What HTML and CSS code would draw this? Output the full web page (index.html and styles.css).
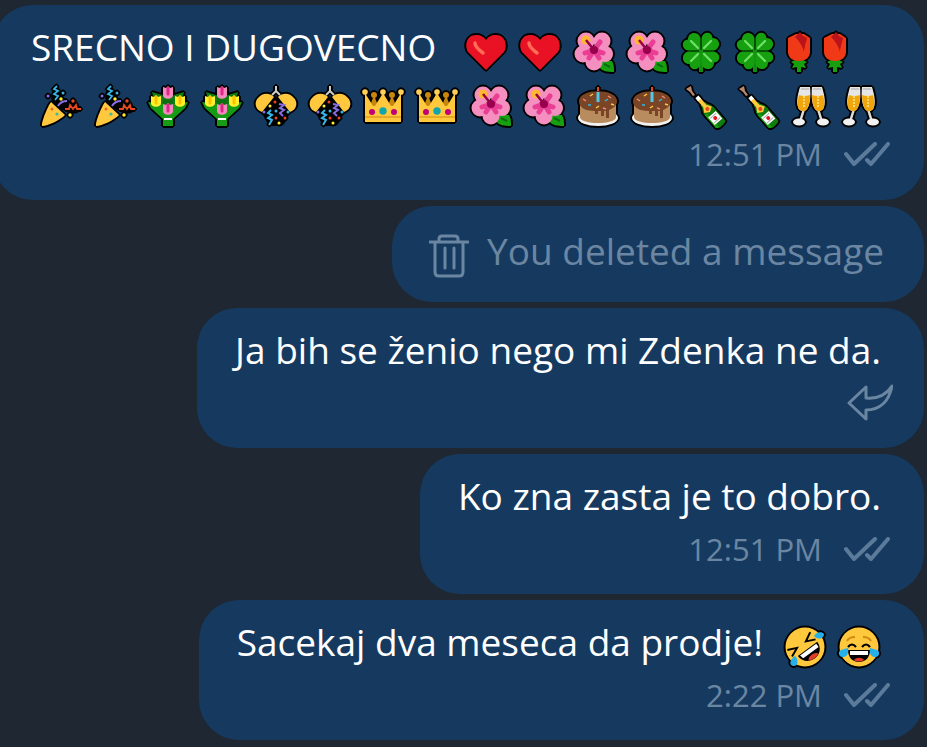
FILE: index.html
```html
<!DOCTYPE html>
<html lang="sr">
<head>
  <meta charset="UTF-8">
  <meta name="viewport" content="width=device-width, initial-scale=1.0">
  <title>Chat</title>
  <link rel="stylesheet" href="styles.css">
</head>
<body>
  <svg class="sprite" aria-hidden="true">
    <symbol id="heart" viewBox="0 0 44 44">
      <path fill="#e81224" d="M22 40L4 22C0 15 3 5 12 5c5 0 8 2 10 5 2-3 5-5 10-5 9 0 12 10 8 17z"/>
      <path d="M11 13q0 4 8 10" fill="none" stroke="#ff6b55" stroke-width="3.5" stroke-linecap="round"/>
    </symbol>
    <symbol id="flower" viewBox="0 0 44 44">
      <path fill="#16a010" d="M28 30l12 1c2 3 2 7 2 11-7 0-12-1-14-4z"/>
      <path d="M32 34l6 3" stroke="#0c6b10" stroke-width="2"/>
      <g fill="#f48fc0"><circle cx="14" cy="11" r="8.5"/><circle cx="30" cy="11" r="8.5"/><circle cx="33" cy="24" r="8"/><circle cx="22" cy="32" r="8.5"/><circle cx="11" cy="24" r="8.5"/></g>
      <path d="M22 20l6-8M22 20l9 3M22 20l5 8M22 20l-5 8M22 20l-9 3" stroke="#e93e93" stroke-width="5" stroke-linecap="round"/>
      <circle cx="14" cy="10" r="4.5" fill="#ffb82e"/>
      <circle cx="22" cy="20" r="4" fill="#98004e"/>
      <path d="M22 20l-8-10" stroke="#98004e" stroke-width="2.5"/>
    </symbol>
    <symbol id="clover" viewBox="0 0 44 44">
      <path d="M22 20v22" stroke="#138a10" stroke-width="4"/>
      <g fill="#16a010">
        <path id="leaf" d="M21.5 20.5H9C2 19 2 10 9 9.5 9 1 20 1 21.5 8z"/>
        <use href="#leaf" transform="rotate(90 22 21)"/>
        <use href="#leaf" transform="rotate(180 22 21)"/>
        <use href="#leaf" transform="rotate(270 22 21)"/>
      </g>
      <path d="M12 11l7 7M32 11l-7 7M12 31l7-7M32 31l-7-7" stroke="#72e069" stroke-width="2.2" stroke-linecap="round"/>
    </symbol>
    <symbol id="rose" viewBox="0 0 26 44">
      <path fill="#16a010" d="M13 28l8 4-3 2 2 4-5-1v5h-4v-5l-5 1 2-4-3-2z"/>
      <path fill="#f03a17" d="M2 8l8-4h8l6 4v14c0 5-4 9-11 9S2 27 2 22z"/>
      <path fill="#ba141a" d="M9 7l5-5 3 4 4 2-3 14C16 15 13 11 9 7z"/>
      <path fill="#f03a17" d="M17 26c2-6 1-13 6-18v15c0 3-3 5-6 6z"/>
    </symbol>
    <symbol id="popper" viewBox="0 0 44 44">
      <path d="M16 3l4 6 2 5 5 3 8 4 4 6-7 1-10-5-8-8z"/>
      <path fill="#ffc83d" d="M12 18l14 13c-5 5-17 11-23 11-1-4 6-20 9-24z"/>
      <path d="M19 22q3-5 9-5" fill="none" stroke="#886ce4" stroke-width="2"/>
      <path d="M18 2l-3 3 4 2-4 3 4 2-3 4" fill="none" stroke="#35b5e5" stroke-width="1.8"/>
      <path d="M26 25h4l1-4 3 4 3-4 1 4h4" fill="none" stroke="#e74820" stroke-width="1.8"/>
      <circle cx="9" cy="12" r="1.5" fill="#886ce4"/><circle cx="24" cy="9" r="1.5" fill="#35b5e5"/>
      <circle cx="22" cy="15" r="1.7" fill="#fff12d"/><circle cx="34" cy="17" r="1.7" fill="#e74820"/>
      <circle cx="31" cy="31" r="1.7" fill="#fff12d"/><circle cx="13" cy="25" r="1.5" fill="#f0642d"/><circle cx="18" cy="30" r="1.6" fill="#40b8a0"/>
    </symbol>
    <symbol id="bouquet" viewBox="0 0 44 44">
      <path fill="#107c10" d="M6 8l10 3 6 3 6-3 10-3-5 18H11z"/>
      <path fill="#169b14" d="M2 18l20 3 20-3-3 6-12 11v7H17v-7L5 24z"/>
      <path fill="#0e6e12" d="M17 16h10v6H17z"/>
      <path fill="#fff" d="M18 34h8v2h-8z"/>
      <path fill="#f58ac0" d="M17 3l3 1 2-2 2 2 3-1v8c0 5-10 5-10 0zM17 20l3 1 2-2 2 2 3-1v7c0 5-10 5-10 0z"/>
      <path stroke="#df2586" stroke-width="3" stroke-linecap="round" d="M22 4v6M22 21v6"/>
      <path fill="#fff12d" d="M5 12l3 1 2-2 2 2 3-1v7c0 5-10 5-10 0zM29 12l3 1 2-2 2 2 3-1v7c0 5-10 5-10 0z"/>
      <path stroke="#ffc000" stroke-width="3" stroke-linecap="round" d="M10 13v6M34 13v6"/>
    </symbol>
    <symbol id="ball" viewBox="0 0 44 44">
      <path d="M21 14L9 27l7 13h12l7-13z"/>
      <path fill="#ffc83d" d="M20 13L8 28C1 26 0 18 4 14c4-5 11-6 16-1zM24 13l12 15c7-2 8-10 4-14-4-5-11-6-16-1z"/>
      <path d="M22 2v5l-4 4M22 7l4 4" fill="none" stroke="#ccc" stroke-width="2"/>
      <path d="M17 26l-3 3 4 2-4 3 4 2-3 5" fill="none" stroke="#35b5e5" stroke-width="2"/>
      <path d="M25 20l5 1-4 3 4 2-4 3 3 3" fill="none" stroke="#886ce4" stroke-width="2"/>
      <g fill="#e74820"><circle cx="21" cy="18" r="1.5"/><circle cx="22" cy="34" r="1.5"/><circle cx="31" cy="34" r="1.5"/></g>
      <g fill="#fff12d"><circle cx="16" cy="22" r="1.5"/><circle cx="25" cy="39" r="1.5"/></g>
      <g fill="#35b5e5"><circle cx="22" cy="27" r="1.5"/><circle cx="34" cy="28" r="1.5"/></g>
      <circle cx="10" cy="28" r="1.5" fill="#886ce4"/>
    </symbol>
    <symbol id="crown" viewBox="0 0 44 44">
      <path fill="#c8860d" d="M13 11l6 16H7zM31 11l6 16H25z"/>
      <circle cx="13" cy="11" r="3" fill="#c8860d"/><circle cx="31" cy="11" r="3" fill="#c8860d"/>
      <path fill="#ffc83d" d="M4 9l8 13h2l8-13 8 13h2l8-13v29H4z"/>
      <g fill="#ffcf5c"><circle cx="4" cy="8" r="2.8"/><circle cx="22" cy="8" r="2.8"/><circle cx="40" cy="8" r="2.8"/></g>
      <path d="M4 33h36" stroke="#d08c10" stroke-width="1"/>
      <circle cx="11" cy="28" r="3" fill="#bf0077"/><circle cx="33" cy="28" r="3" fill="#bf0077"/><circle cx="22" cy="27" r="3.7" fill="#0fa5ad"/>
    </symbol>
    <symbol id="cake" viewBox="0 0 44 44">
      <ellipse cx="22" cy="34" rx="20" ry="8" fill="#f2f2f2"/>
      <path fill="#b98c5f" d="M4 18h36v15c0 8-36 8-36 0z"/>
      <path fill="#7a4527" d="M3 17C3 4 41 4 41 17c0 4-3 7-8 9v8h-3v-7h-2v5h-3v-5h-3v3h-3v-3C8 27 3 23 3 17z"/>
      <path stroke="#50c8e8" stroke-width="3" d="M22 8v10"/>
      <path stroke="#e74820" stroke-width="2" d="M22 3v4"/>
      <path d="M14 12l3-2M20 24l3-2M35 20l3 1" stroke="#ffc83d" stroke-width="1.5"/>
      <path d="M7 15l3 2M32 12l3 2M27 24l3 1" stroke="#f08a70" stroke-width="1.5"/>
      <path d="M29 17l3-2M12 21h3" stroke="#35b5e5" stroke-width="1.5"/>
    </symbol>
    <symbol id="bottle" viewBox="0 0 44 44">
      <path fill="#b9896e" d="M2 5l5-3 1 5 3 4-2 1-3-4z"/>
      <g transform="rotate(-41 26 28)">
        <path fill="#107c10" d="M23 17h6c0 5 3 5 3 10v17c0 3-12 3-12 0V27c0-5 3-5 3-10z"/>
        <path fill="#16a010" d="M20 27h3v18h-3z"/>
        <path fill="#ffc83d" d="M24 11h4v9l3 5-5 3-5-3 3-5z"/>
        <path fill="#fff" d="M24 8h4v4h-4zM21 31h10v10H21z"/>
        <circle cx="26" cy="24" r="2" fill="#e74820"/><circle cx="26" cy="36" r="2" fill="#e81224"/>
        <path d="M22 33h8M22 39h8" stroke="#aaa" stroke-width="1"/>
      </g>
    </symbol>
    <symbol id="glasses" viewBox="0 0 40 44">
      <g id="glass">
        <path d="M13 25l-4 13" stroke="#ddd" stroke-width="2.5"/>
        <path fill="#e6e6e6" d="M9 3h10c1 9 0 18-3 22-3 4-8 2-9-2-2-6 0-13 2-20z"/>
        <path fill="#f2a60d" d="M8 11q5 2 11 0c0 6-1 11-3 14-3 4-8 2-9-2-1-4 0-8 1-12z"/>
        <path d="M13 12v12" stroke="#ffd66b" stroke-width="2" stroke-dasharray="2 1"/>
        <path d="M10 5h8" stroke="#bbb" stroke-width="1.5"/>
        <ellipse cx="8" cy="38" rx="6" ry="3.5" fill="#f2f2f2"/>
      </g>
      <use href="#glass" transform="matrix(-1 0 0 1 40 0)"/>
    </symbol>
    <symbol id="rofl" viewBox="0 0 44 44">
      <circle cx="22" cy="22" r="19.5" fill="#ffc83d"/>
      <g transform="rotate(-36 22 22)">
        <path d="M6 14l9 4-9 4M35 13l-9 5 9 4" fill="none" stroke="#000" stroke-width="2"/>
        <path d="M11 25h24c0 7-5 12-12 12s-12-5-12-12z"/>
        <path fill="#fff" d="M13 26h20v4H14z"/>
        <path fill="#e23b28" d="M17 35c2-4 10-4 12 0-3 2-9 2-12 0z"/>
      </g>
      <path fill="#26b0ea" d="M31 11c2-4 8-5 10-2 0 4-5 7-10 2zM12 31c4 4 3 10-1 10-5 0-5-6 1-10z"/>
    </symbol>
    <symbol id="joy" viewBox="0 0 44 44">
      <circle cx="22" cy="22" r="19.5" fill="#ffc83d"/>
      <path d="M10 16q2-4 8-4M34 16q-2-4-8-4" fill="none" stroke="#d08c10" stroke-width="2"/>
      <path d="M11 22q4-5 8 0M25 22q4-5 8 0" fill="none" stroke="#000" stroke-width="2.2"/>
      <path d="M11 25h22c0 7-4 12-11 12s-11-5-11-12z"/>
      <path fill="#fff" d="M13 26h18v4H13z"/>
      <path fill="#e23b28" d="M17 35c2-3 8-3 10 0-3 2-7 2-10 0z"/>
      <path fill="#26b0ea" d="M11 23c1 5-1 9-5 9s-6-5-2-7zM33 23c-1 5 1 9 5 9s6-5 2-7z"/>
    </symbol>
    <symbol id="checks" viewBox="0 0 46 24">
      <path d="M2 12l8 10L31 2M23 18l4 4L44 2" fill="none" stroke="currentColor" stroke-width="4" stroke-linecap="round" stroke-linejoin="round"/>
    </symbol>
    <symbol id="trash" viewBox="0 0 40 44">
      <path d="M1 8h38M10 8V5q0-3 3-3h13q3 0 3 3v3M6 8v30q0 4 4 4h20q4 0 4-4V8M16 14v20M25 14v20" fill="none" stroke="currentColor" stroke-width="3" stroke-linecap="round"/>
    </symbol>
    <symbol id="forward" viewBox="0 0 46 38">
      <path d="M2 19L19 3v11C30 15 39 11 45 2 42 17 33 26 19 26v9z" fill="none" stroke="currentColor" stroke-width="3" stroke-linejoin="round"/>
    </symbol>
  </svg>

  <main class="chat">
    <div class="message wide">
      <div class="text first-line">
        <span>SRECNO I DUGOVECNO</span>
        <span class="emojis">
          <svg class="emoji"><use href="#heart"/></svg>
          <svg class="emoji"><use href="#heart"/></svg>
          <svg class="emoji"><use href="#flower"/></svg>
          <svg class="emoji"><use href="#flower"/></svg>
          <svg class="emoji"><use href="#clover"/></svg>
          <svg class="emoji"><use href="#clover"/></svg>
          <svg class="emoji narrow"><use href="#rose"/></svg>
          <svg class="emoji narrow"><use href="#rose"/></svg>
        </span>
      </div>
      <div class="text emojis second-line">
        <svg class="emoji"><use href="#popper"/></svg>
        <svg class="emoji"><use href="#popper"/></svg>
        <svg class="emoji"><use href="#bouquet"/></svg>
        <svg class="emoji"><use href="#bouquet"/></svg>
        <svg class="emoji"><use href="#ball"/></svg>
        <svg class="emoji"><use href="#ball"/></svg>
        <svg class="emoji"><use href="#crown"/></svg>
        <svg class="emoji"><use href="#crown"/></svg>
        <svg class="emoji"><use href="#flower"/></svg>
        <svg class="emoji"><use href="#flower"/></svg>
        <svg class="emoji"><use href="#cake"/></svg>
        <svg class="emoji"><use href="#cake"/></svg>
        <svg class="emoji"><use href="#bottle"/></svg>
        <svg class="emoji"><use href="#bottle"/></svg>
        <svg class="emoji glasses"><use href="#glasses"/></svg>
        <svg class="emoji glasses"><use href="#glasses"/></svg>
      </div>
      <div class="meta"><time>12:51 PM</time><svg class="checks"><use href="#checks"/></svg></div>
    </div>

    <div class="message deleted">
      <svg class="trash"><use href="#trash"/></svg>
      <span>You deleted a message</span>
    </div>

    <div class="message">
      <div class="text">Ja bih se ženio nego mi Zdenka ne da.</div>
      <div class="meta"><svg class="forward"><use href="#forward"/></svg></div>
    </div>

    <div class="message">
      <div class="text">Ko zna zasta je to dobro.</div>
      <div class="meta"><time>12:51 PM</time><svg class="checks"><use href="#checks"/></svg></div>
    </div>

    <div class="message">
      <div class="text with-emoji">
        <span>Sacekaj dva meseca da prodje!</span>
        <svg class="emoji"><use href="#rofl"/></svg>
        <svg class="emoji"><use href="#joy"/></svg>
      </div>
      <div class="meta"><time>2:22 PM</time><svg class="checks"><use href="#checks"/></svg></div>
    </div>
  </main>
</body>
</html>
```
FILE: styles.css
```css
* { box-sizing: border-box; }
body { margin: 0; background: #1e2732; font-family: "Open Sans", "Noto Sans", sans-serif; font-weight: 400; overflow-x: hidden; }
.sprite { position: absolute; width: 0; height: 0; }

.chat { display: flex; flex-direction: column; align-items: flex-end; gap: 6px; padding: 5px 3px 4px 0; }
.message { background: #163a5f; color: #fff; border-radius: 40px; padding: 15px 43px 19px 38px; font-size: 37px; line-height: 54px; white-space: nowrap; }
.message.wide { align-self: stretch; margin-left: -7px; padding-bottom: 20px; }

.first-line, .with-emoji { display: flex; align-items: flex-end; gap: 10px; }
.with-emoji span { margin-right: 10px; }
.first-line .emojis { flex: 1; margin-left: 18px; padding-right: 33px; }
.emojis { display: flex; align-items: flex-end; justify-content: space-between; }
.second-line { height: 54px; padding-left: 8px; }

.emoji { width: 44px; height: 44px; flex: none; filter: drop-shadow(1px 1px 0 #000) drop-shadow(-1px -1px 0 #000) drop-shadow(1px -1px 0 #000) drop-shadow(-1px 1px 0 #000); }
.emoji.narrow { width: 26px; }
.emoji.glasses { width: 40px; }

.meta { display: flex; align-items: center; justify-content: flex-end; gap: 22px; height: 52px; margin-right: -9px; color: #6b86a2; font-size: 31px; }
.checks { width: 46px; height: 24px; color: #5c7b9b; }
.forward { width: 46px; height: 38px; margin-right: -3px; }

.message.deleted { display: flex; align-items: flex-end; gap: 18px; padding: 18px 40px 24px 37px; color: #6b86a2; }
.trash { width: 40px; height: 44px; }
```
